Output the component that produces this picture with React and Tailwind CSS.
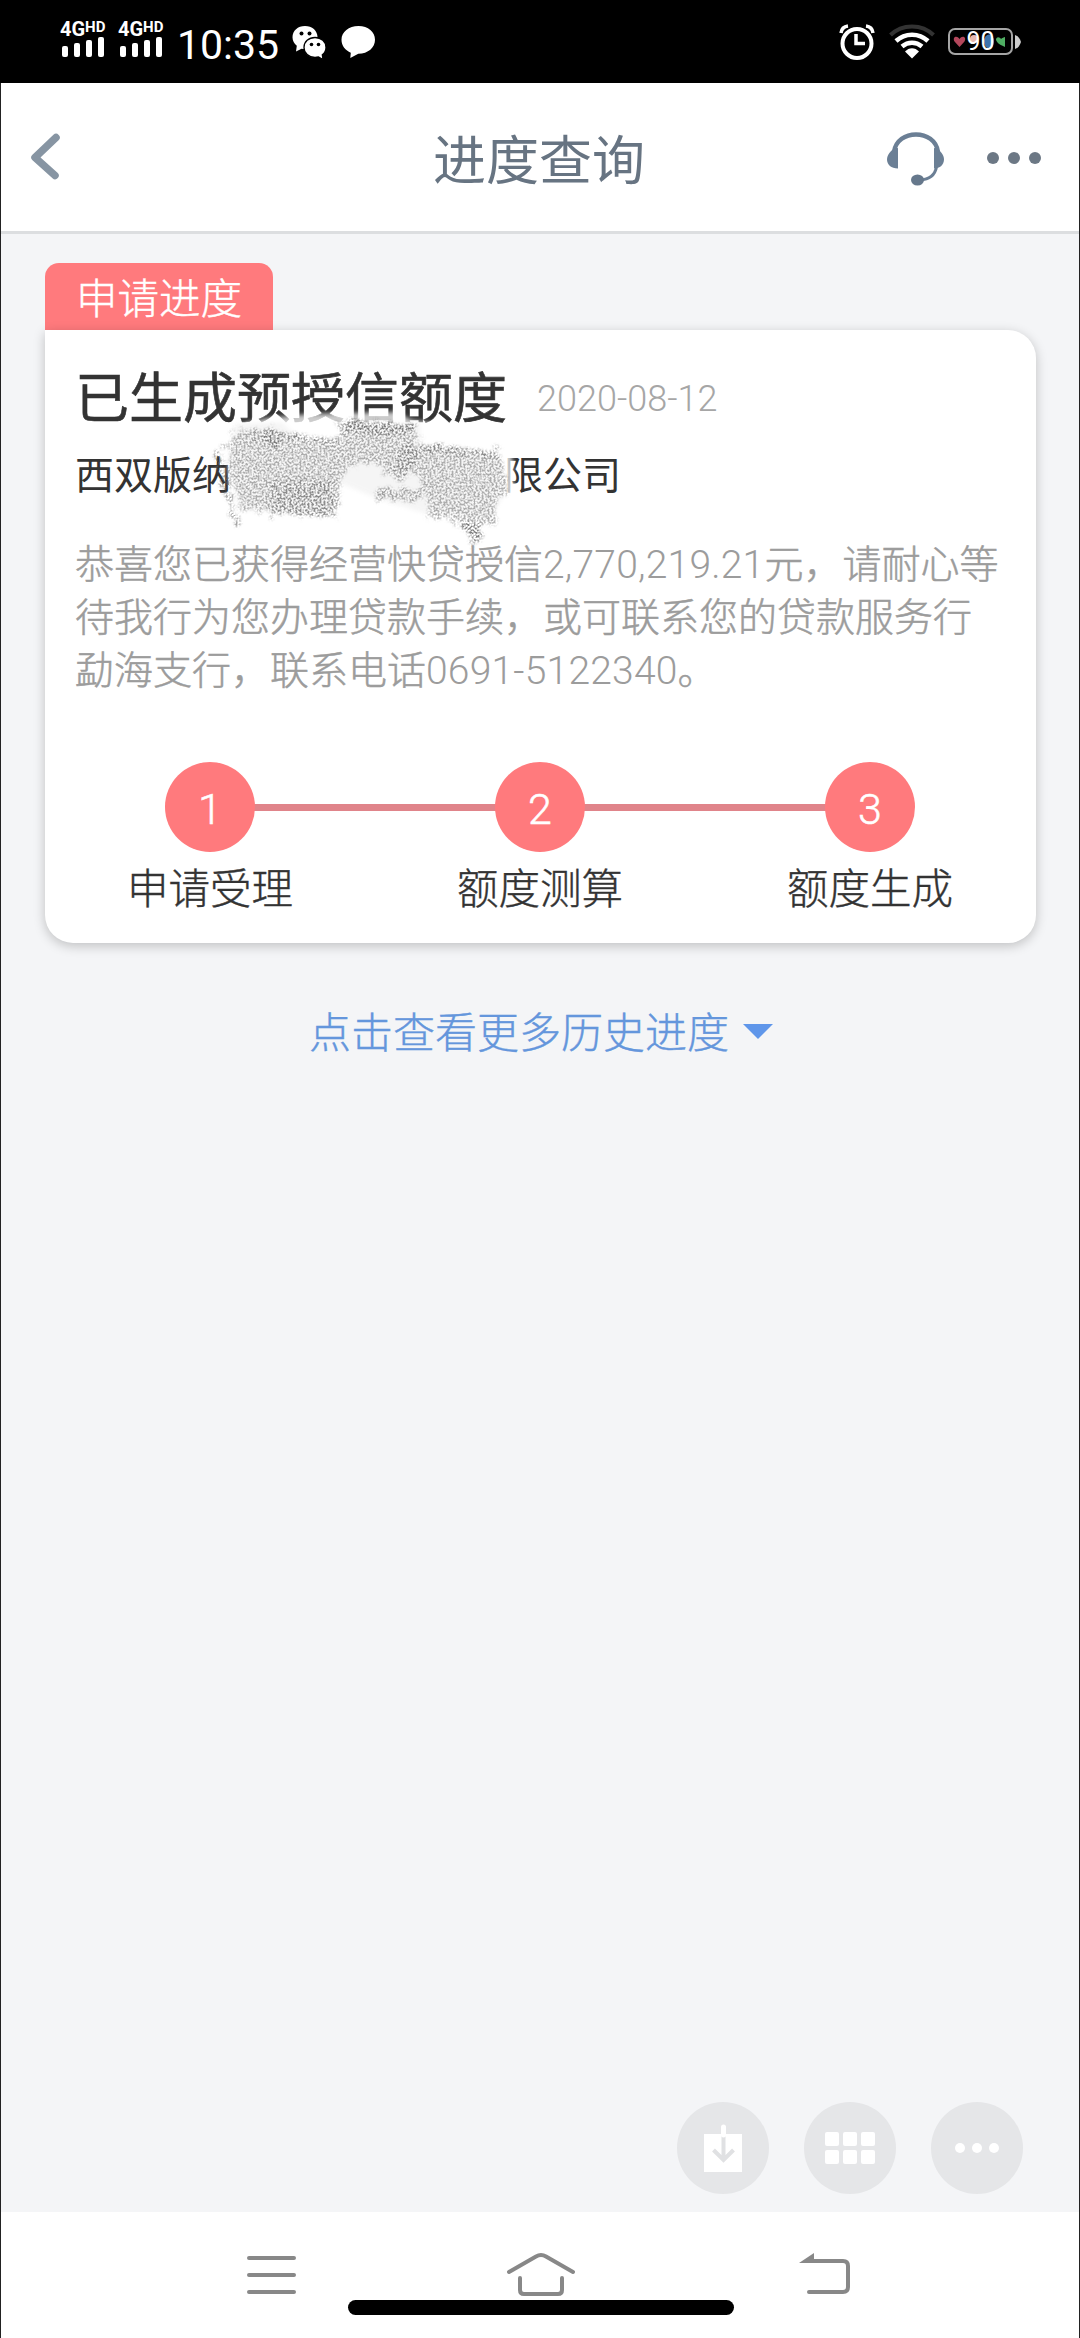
const cjk = "font-['Roboto','Noto_Sans_CJK_SC',sans-serif]";

const steps = [
  { id: 1, label: '申请受理' },
  { id: 2, label: '额度测算' },
  { id: 3, label: '额度生成' },
];

const Signal = () => (
  <div className="flex w-[47px] flex-col items-start">
    <div className="flex h-[16px] items-start text-white font-['Roboto',sans-serif] font-bold leading-none">
      <span className="text-[20px] leading-[17px]">4G</span>
      <span className="text-[15px] leading-[12px]">HD</span>
    </div>
    <svg width="46" height="21" viewBox="0 0 46 21" fill="#fff" className="mt-[-1px]">
      <rect x="2" y="10" width="6" height="11" rx="2" />
      <rect x="14" y="7" width="6" height="14" rx="2" />
      <rect x="26" y="4" width="6" height="17" rx="2" />
      <rect x="38" y="1" width="6" height="20" rx="2" />
    </svg>
  </div>
);

const WechatIcon = () => (
  <svg width="34" height="34" viewBox="0 0 34 34">
    <path d="M13 0C5.800 0 .5 4.800 .5 11.200c0 3.500 1.700 6.400 4.300 8.500L4 25.500l5.500-2.800c1.100.2 2.300.4 3.500.4 7.100 0 12.500-5.300 12.500-11.900S20.100 0 13 0Z" fill="#fff" />
    <circle cx="9.500" cy="7.500" r="2" fill="#000" />
    <circle cx="17.500" cy="7.500" r="2" fill="#000" />
    <path d="M23 11.500c-6.300 0-11 4.300-11 9.900 0 5.700 4.700 10.100 11 10.100 1.200 0 2.400-.2 3.500-.5L31 33.500l-.7-4.700c2.400-1.900 3.700-4.500 3.700-7.400 0-5.600-4.700-9.900-11-9.900Z" fill="#fff" stroke="#000" strokeWidth="1.300" />
    <circle cx="19.500" cy="18.500" r="1.800" fill="#000" />
    <circle cx="26.500" cy="18.500" r="1.800" fill="#000" />
  </svg>
);

const StatusBar = () => (
  <div className="flex h-[83px] items-start bg-black pl-[60px] pr-[58px]">
    <div className="mt-[21px] flex gap-[11px]">
      <Signal />
      <Signal />
    </div>
    <span className="ml-[12px] mt-[22px] w-[104px] text-[41px] leading-[46px] text-white font-['Roboto',sans-serif]">10:35</span>
    <div className="ml-[11px] mt-[26px]"><WechatIcon /></div>
    <svg width="35" height="34" viewBox="0 0 35 34" className="ml-[15px] mt-[25px]" fill="#fff">
      <path d="M17.500 1C7.800 1 .5 6.900.5 14.700c0 6 4 10.700 9.300 13L9.300 33l8-4.300C27.200 28.600 34 22.600 34 14.700 34 6.900 27.200 1 17.500 1Z" />
    </svg>
    <div className="ml-auto mt-[24px] flex">
      <svg width="36" height="36" viewBox="0 0 36 36" fill="none" stroke="#fff">
        <circle cx="18" cy="19.500" r="14.500" strokeWidth="4" />
        <path d="M17 10v9.500h9" strokeWidth="3.500" />
        <path d="M2 9C2.500 5 5 2.500 9 2M34 9C33.500 5 31 2.500 27 2" strokeWidth="3.500" />
      </svg>
      <svg width="46" height="36" viewBox="0 0 46 36" fill="none" className="ml-[14px]">
        <path d="M1.500 11C13-.5 33-.5 44.500 11" stroke="#333" strokeWidth="4" />
        <path d="M7 17C16 8.500 30 8.500 39 17" stroke="#fff" strokeWidth="4.500" />
        <path d="M13 22.500C19 17.500 27 17.500 33 22.500" stroke="#fff" strokeWidth="4.500" />
        <path d="M23 34.500l-7-7c4-4.500 10-4.500 14 0Z" fill="#fff" />
      </svg>
      <div className="relative ml-[13px] mt-[4px] flex h-[27px] w-[65px] items-center justify-center rounded-[7px] border-2 border-[#a5a5a5]">
        <svg width="61" height="23" viewBox="0 0 61 23" className="absolute left-0 top-0">
          <path d="M9.500 17 4.500 11.500C2 7 7 5 9.500 9c2.500-4 7.500-2 5 2.500Z" fill="#b3475c" />
          <ellipse cx="24" cy="9" rx="4" ry="4" fill="#e7b9b0" />
          <ellipse cx="39" cy="11.500" rx="5" ry="7" fill="#3e74ad" />
          <path d="M46 10c0-4 4-3 5-1 1-1 3-2 4-2v10l-2-1c-3-1-6-3-7-6Z" fill="#4fae63" />
        </svg>
        <span className="relative text-[25px] leading-[24px] text-white font-['Roboto',sans-serif]">90</span>
      </div>
      <svg width="7" height="14" viewBox="0 0 7 14" className="ml-[2px] mt-[11px]"><path d="M0 0q4 1 6 7-2 6-6 7Z" fill="#ccc" /></svg>
    </div>
  </div>
);

const Header = () => (
  <div className="flex h-[151px] items-start justify-between border-b-[3px] border-[#dcdee0] bg-white pl-[27px] pr-[37px]">
    <svg width="34" height="50" viewBox="0 0 34 50" className="mt-[48px]" fill="none" stroke="#8795a3" strokeWidth="7.500" strokeLinecap="round" strokeLinejoin="round">
      <path d="M28 6.500 7 26.500 27 44.500" />
    </svg>
    <h1 className={`${cjk} ml-[130px] mt-[46px] text-[53px] leading-[66px] text-[#677482]`}>进度查询</h1>
    <div className="mt-[47px] flex items-start gap-[40px]">
      <svg width="60" height="58" viewBox="0 0 60 58" fill="none">
        <path d="M8 22C11-1.500 49-1.500 52 22" stroke="#6b7f95" strokeWidth="4.500" />
        <path d="M12 18v20.500C5 38.500 1 34.500 1 29.500S5 21 8 18.500Z" fill="#6b7f95" />
        <path d="M48 18v20.500c6 0 10-4 10-9S54 21 51 18.500Z" fill="#6b7f95" />
        <path d="M50.500 37C49 45 43 49.500 34 50" stroke="#6b7f95" strokeWidth="3" />
        <ellipse cx="31.500" cy="50" rx="6.500" ry="5.500" fill="#66788c" />
      </svg>
      <svg width="56" height="14" viewBox="0 0 56 14" fill="#6c7885" className="mt-[21px]">
        <circle cx="7" cy="7" r="6" />
        <circle cx="28" cy="7" r="6" />
        <circle cx="49" cy="7" r="6" />
      </svg>
    </div>
  </div>
);

// pencil-like smudge that hides the middle of the company name
const Scribble = () => (
  <svg width="320" height="150" viewBox="205 404 320 150" className="absolute left-[160px] top-[74px]">
    <defs>
      <filter id="grain" filterUnits="userSpaceOnUse" x="205" y="404" width="320" height="150" colorInterpolationFilters="sRGB">
        <feTurbulence type="fractalNoise" baseFrequency="0.5" numOctaves="3" seed="4" result="n" />
        <feColorMatrix in="n" type="matrix" values="0 0 0 0 0.400  0 0 0 0 0.400  0 0 0 0 0.400  5 0 0 0 -2.100" result="g" />
        <feTurbulence type="fractalNoise" baseFrequency="0.12" numOctaves="3" seed="9" result="w" />
        <feDisplacementMap in="SourceGraphic" in2="w" scale="18" xChannelSelector="R" yChannelSelector="G" result="d" />
        <feGaussianBlur in="d" stdDeviation="1.500" result="s" />
        <feComposite in="g" in2="s" operator="in" />
      </filter>
      <filter id="soft"><feGaussianBlur stdDeviation="2" /></filter>
    </defs>
    <path d="M232 438 240 424 268 418 310 414 396 412 412 420 440 424 500 436 512 456 514 500 480 530 380 544 340 516 236 512 228 470Z" fill="#fff" opacity="0.750" filter="url(#soft)" />
    <path d="M236 424 282 422 300 440 340 446 345 424 420 424 420 446 500 456 506 490 490 520 420 512 376 498 338 482 332 514 240 510 228 460Z" fill="#888" opacity="0.080" filter="url(#soft)" />
    <g filter="url(#grain)" fill="#000">
      <path d="M235 430 278 426 286 434 340 442 334 422 418 424 414 442 500 453 508 490 496 500 492 526 456 522 426 516 430 500 418 490 422 478 408 472 380 476 384 462 346 466 342 480 334 514 266 512 240 508 228 474 226 448Z" opacity="0.500" />
      <path d="M256 430 282 432 280 446 258 442Z" opacity="0.700" />
      <path d="M340 420 416 424 408 436 352 432Z" opacity="0.650" />
      <path d="M405 442 428 446 402 482 388 474Z" opacity="0.500" />
      <path d="M378 488 424 490 418 500 378 499Z" opacity="0.600" />
      <path d="M268 482 334 478 334 512 272 508Z" opacity="0.450" />
      <path d="M456 520 484 524 477 546 470 536Z" opacity="0.850" />
      <path d="M270 509 336 512 336 517 270 514ZM280 432 342 440 342 445 280 437ZM430 445 504 452 504 458 430 450Z" opacity="0.600" />
      <path d="M212 450 218 450 240 524 234 524Z" opacity="0.700" />
    </g>
  </svg>
);

const Step = ({ step }) => (
  <div className="relative flex w-[180px] flex-col items-center">
    <div className="flex size-[90px] items-center justify-center rounded-full bg-[#ff7a7d] pt-[5px] text-[43px] leading-none text-white font-['Roboto',sans-serif] font-light [-webkit-text-stroke:0.5px]">{step.id}</div>
    <span className={`${cjk} mt-[8px] text-[41.500px] font-light leading-[60px] text-[#333] [-webkit-text-stroke:0.4px]`}>{step.label}</span>
  </div>
);

const ProgressCard = () => (
  <div className="relative h-[613px] rounded-[28px] rounded-tl-none bg-white pl-[30px] pt-[35px] shadow-[0_3px_12px_rgba(0,0,0,0.22)]">
    <div className="flex items-center">
      <h2 className={`${cjk} text-[54px] leading-[70px] text-[#333] [-webkit-text-stroke:0.6px]`}>已生成预授信额度</h2>
      <span className="relative -top-px ml-[30px] text-[36px] font-light text-[#a6a6a6] font-['Roboto',sans-serif]">2020-08-12</span>
    </div>
    <div className={`${cjk} mt-[13px] flex text-[39px] leading-[56px] text-[#333]`}>
      <span>西双版纳</span>
      <span className="ml-[273px]">限公司</span>
    </div>
    <Scribble />
    <p className={`${cjk} relative mt-[35px] whitespace-nowrap text-[39px] font-light leading-[53px] text-[#9c9c9c]`}>
      <span className="[-webkit-text-stroke:0.5px]">恭喜您已获得经营快贷授信</span><span className="tracking-[0.2px]">2,770,219.21</span><span className="[-webkit-text-stroke:0.5px]">元，请耐心等</span><br />
      <span className="[-webkit-text-stroke:0.5px]">待我行为您办理贷款手续，或可联系您的贷款服务行</span><br />
      <span className="[-webkit-text-stroke:0.5px]">勐海支行，联系电话</span><span className="tracking-[0.2px]">0691-5122340</span><span className="[-webkit-text-stroke:0.5px]">。</span>
    </p>
    <div className="relative mt-[64px] w-[840px] ml-[45px]">
      <div className="absolute left-[90px] right-[90px] top-[42px] h-[7px] bg-[#e0848a]" />
      <div className="flex justify-between">
        {steps.map((s) => <Step key={s.id} step={s} />)}
      </div>
    </div>
  </div>
);

const QuickActions = () => (
  <div className="mb-[18px] mt-auto flex justify-end gap-[35px] pr-[56px]">
    <div className="flex size-[92px] items-center justify-center rounded-full bg-[#e5e6e8]">
      <svg width="40" height="48" viewBox="0 0 40 48">
        <path d="M1 10h38v38H1Z" fill="#fff" />
        <path d="M20.500 11v24M10.500 26l10 10 10-10" fill="none" stroke="#e0e1e3" strokeWidth="4" />
        <path d="M20.500 3v8" stroke="#fff" strokeWidth="5" strokeLinecap="round" />
      </svg>
    </div>
    <div className="flex size-[92px] items-center justify-center rounded-full bg-[#e5e6e8]">
      <div className="grid grid-cols-3 gap-x-[4px] gap-y-[4px]">
        {[0, 1, 2, 3, 4, 5].map((i) => <i key={i} className="block size-[14px] rounded-[2px] bg-white" />)}
      </div>
    </div>
    <div className="flex size-[92px] items-center justify-center gap-[7px] rounded-full bg-[#e5e6e8]">
      {[0, 1, 2].map((i) => <i key={i} className="block size-[10px] rounded-full bg-white" />)}
    </div>
  </div>
);

const NavBar = () => (
  <div className="relative flex h-[126px] items-start bg-white pl-[244px] pt-[38px]">
    <svg width="52" height="46" viewBox="0 0 52 46" stroke="#888" strokeWidth="4" strokeLinecap="round">
      <path d="M4 8h45M4 25h45M4 42h45" />
    </svg>
    <svg width="72" height="48" viewBox="0 0 72 48" fill="none" stroke="#888" strokeWidth="4" strokeLinecap="round" className="ml-[208px]">
      <path d="M4 22 31 6.500q5-3 10 0L68 22" />
      <path d="M15 28v12q0 4 4 4h34q4 0 4-4V28" />
    </svg>
    <svg width="54" height="48" viewBox="0 0 54 48" fill="none" stroke="#888" strokeWidth="4" strokeLinecap="round" className="ml-[222px]">
      <path d="M8 11h36q5 0 5 5v21q0 5-5 5H10" />
      <path d="M0 13 15 3v10Z" fill="#888" stroke="none" />
    </svg>
    <div className="absolute left-[347px] top-[88px] h-[15px] w-[386px] rounded-full bg-black" />
  </div>
);

export default function App() {
  return (
    <div className="flex h-[2338px] w-[1080px] flex-col overflow-hidden bg-[#f4f5f7]">
      <StatusBar />
      <div className="flex flex-1 flex-col border-x border-[#222]">
        <Header />
        <main className="flex flex-1 flex-col">
          <div className="pl-[44px] pr-[43px] pt-[29px]">
            <div className={`${cjk} flex h-[67px] w-[228px] items-center justify-center rounded-t-[14px] bg-[#ff7a7d] pt-[7px] text-[41.500px] font-light leading-none text-white [-webkit-text-stroke:0.4px]`}>申请进度</div>
            <ProgressCard />
          </div>
          <button className={`${cjk} mt-[60px] flex items-center pl-[308px] text-[42px] font-light leading-[62px] text-[#6496dc] [-webkit-text-stroke:0.4px]`}>
            点击查看更多历史进度
            <svg width="30" height="15" viewBox="0 0 30 15" className="relative -top-[3px] ml-[14px]"><path d="M0 0h30L15 15Z" fill="#5f96ea" /></svg>
          </button>
          <QuickActions />
        </main>
        <NavBar />
      </div>
    </div>
  );
}
